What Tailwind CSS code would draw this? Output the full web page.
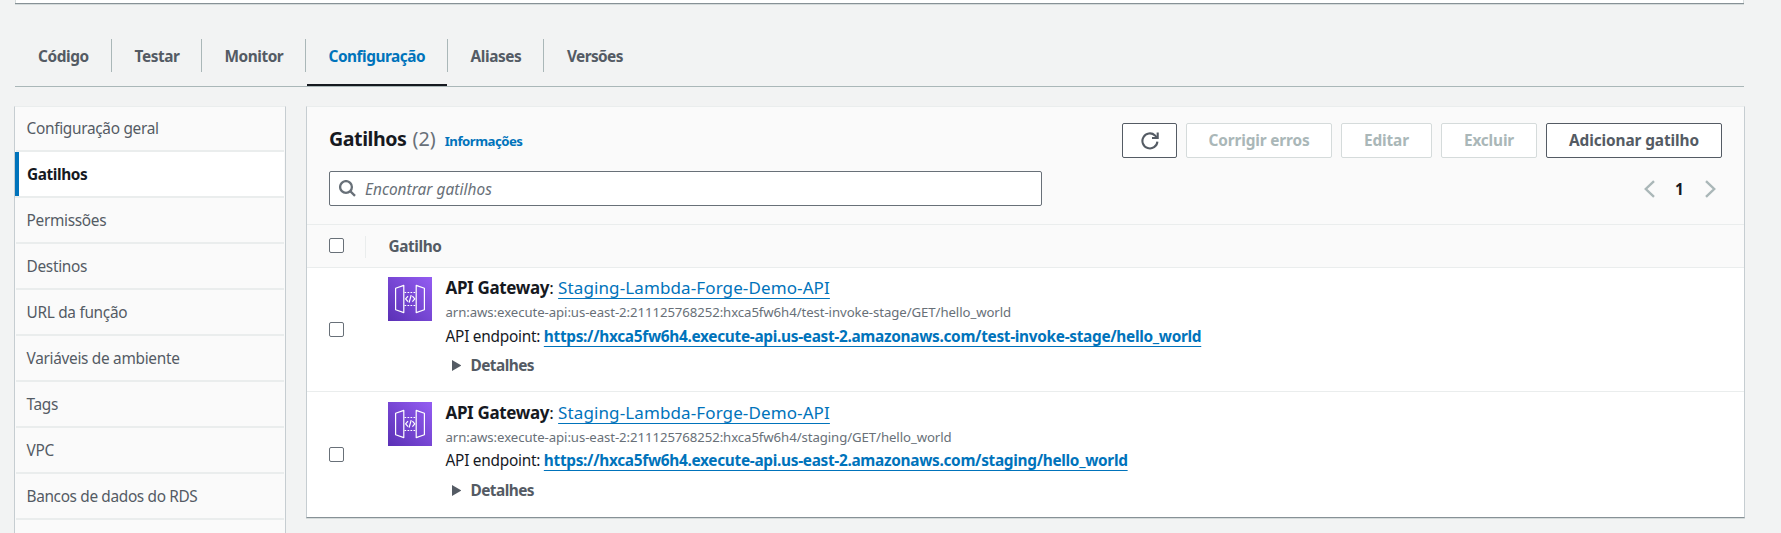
<!DOCTYPE html>
<html lang="pt-BR">
<head>
<meta charset="utf-8">
<title>Gatilhos</title>
<script src="https://cdn.jsdelivr.net/npm/@tailwindcss/browser@4"></script>
</head>
<body class="h-[533px] overflow-hidden bg-[#f2f3f3] font-['Noto_Sans','Liberation_Sans',sans-serif] text-[15.4px] text-[#16191f]">
<svg class="absolute size-0">
  <defs>
    <linearGradient id="gw" x1="0" y1="1" x2="1" y2="0"><stop offset="0" stop-color="#5a30b5"/><stop offset="1" stop-color="#945df2"/></linearGradient>
    <symbol id="gateway" viewBox="0 0 44 44">
      <rect width="44" height="44" fill="url(#gw)"/>
      <g fill="none" stroke="#fff" stroke-width="1.2" stroke-linejoin="round">
        <path d="M7.6 11.2 15.8 8.4V35.6L7.6 32.8Z"/>
        <path d="M36.4 11.2 28.2 8.4V35.6L36.4 32.8Z"/>
        <path d="M16.5 15.5H28M16.5 28.5H28" stroke-dasharray="1.7 1.3"/>
        <path d="M20 19.2 17.6 21.9 20 24.6M24.4 19.2 26.8 21.9 24.4 24.6M23.2 18.2 21.1 25.6"/>
      </g>
    </symbol>
  </defs>
</svg>

<div class="ml-[15px] h-[3px] w-[1729px] border-x border-[#d5dbdb] bg-white shadow-[0_1px_0_#879196,0_2px_0_#d5dbdb]"></div>

<nav class="ml-[15px] flex h-[84px] w-[1729px] border-b border-[#aab7b8] pt-9 font-bold leading-[35px] text-[#545b64]">
  <div class="h-[33px] w-[97px] border-r border-[#aab7b8] pl-[23px] tracking-[-0.4px]">Código</div>
  <div class="h-[33px] w-[90px] border-r border-[#aab7b8] pl-[22.5px] tracking-[-0.42px]">Testar</div>
  <div class="h-[33px] w-[104px] border-r border-[#aab7b8] pl-[22.5px] tracking-[-0.45px]">Monitor</div>
  <div class="flex w-[142px] flex-col text-[#0073bb]">
    <div class="h-[33px] border-r border-[#aab7b8] pl-[22.5px] tracking-[-0.48px]">Configuração</div>
    <div class="mt-auto mr-px ml-px h-[2px] bg-[#16191f]"></div>
  </div>
  <div class="h-[33px] w-[96px] border-r border-[#aab7b8] pl-[22.5px] tracking-[-0.4px]">Aliases</div>
  <div class="h-[33px] pl-[23px] tracking-[-0.6px]">Versões</div>
</nav>

<div class="ml-[14px] flex items-start gap-[20px] pt-[19px]">
  <aside class="h-[440px] w-[272px] shrink-0 border border-[#c6cdd1] border-t-[#eaeded] bg-[#fafafa] leading-[43px] tracking-[-0.3px] text-[#545b64]">
    <div class="mx-px h-[45px] border-b-2 border-[#eaeded] pl-[10.5px] leading-[44px]">Configuração geral</div>
    <div class="mr-px h-[46px] border-b-2 border-[#eaeded] bg-white font-bold tracking-[-0.4px] text-[#16191f]"><div class="h-[44px] border-l-4 border-[#0073bb] pl-[8px] leading-[45px]">Gatilhos</div></div>
    <div class="mx-px h-[46px] border-b-2 border-[#eaeded] pl-[10.5px] leading-[45px]">Permissões</div>
    <div class="mx-px h-[46px] border-b-2 border-[#eaeded] pl-[10.5px] leading-[45px]">Destinos</div>
    <div class="mx-px h-[46px] border-b-2 border-[#eaeded] pl-[10.5px] leading-[45px]">URL da função</div>
    <div class="mx-px h-[46px] border-b-2 border-[#eaeded] pl-[10.5px] leading-[45px]">Variáveis de ambiente</div>
    <div class="mx-px h-[46px] border-b-2 border-[#eaeded] pl-[10.5px] leading-[45px]">Tags</div>
    <div class="mx-px h-[46px] border-b-2 border-[#eaeded] pl-[10.5px] leading-[45px]">VPC</div>
    <div class="mx-px h-[46px] border-b-2 border-[#eaeded] pl-[10.5px] leading-[45px] tracking-[-0.35px]">Bancos de dados do RDS</div>
  </aside>

  <main class="w-[1439px] border border-[#c6cdd1] border-t-[#eaeded] border-b-[#879196] bg-white shadow-[0_1px_0_#d5dbdb]">
    <header class="border-b border-[#eaeded] bg-[#fafafa] pt-[16px] pr-[22px] pb-[18px] pl-[22px]">
      <div class="flex h-[35px] items-center">
        <h2 class="mb-[3px] text-[19.6px] font-bold leading-[34px] tracking-[-0.43px]">Gatilhos</h2>
        <span class="mb-[3px] ml-[6px] text-[19.8px] leading-[34px] text-[#687078]">(2)</span>
        <span class="mt-[3px] ml-[9px] text-[13.2px] font-bold tracking-[-0.5px] text-[#0073bb]">Informações</span>
        <div class="ml-auto flex gap-[9px] text-center font-bold leading-[33px]">
          <div class="flex h-[35px] w-[55px] items-center justify-center rounded-[2px] border border-[#545b64] bg-white">
            <svg class="size-[18px]" viewBox="0 0 18 18" fill="none" stroke="#545b64" stroke-width="2.1"><path d="M16.4 9.6A7.5 7.5 0 1 1 14 3.4L16 5.6"/><path d="M16.7 0.4V6H11"/></svg>
          </div>
          <div class="h-[35px] w-[146px] rounded-[2px] border border-[#d5dbdb] bg-white tracking-[-0.15px] text-[#aab7b8]">Corrigir erros</div>
          <div class="h-[35px] w-[91px] rounded-[2px] border border-[#d5dbdb] bg-white tracking-[-0.15px] text-[#aab7b8]">Editar</div>
          <div class="h-[35px] w-[96px] rounded-[2px] border border-[#d5dbdb] bg-white tracking-[-0.15px] text-[#aab7b8]">Excluir</div>
          <div class="h-[35px] w-[176px] rounded-[2px] border border-[#545b64] bg-white tracking-[-0.1px] text-[#545b64]">Adicionar gatilho</div>
        </div>
      </div>
      <div class="mt-[13px] flex items-center justify-between">
        <div class="flex h-[35px] w-[713px] items-center rounded-[2px] border border-[#687078] bg-white pl-[9px]">
          <svg class="size-[17px]" viewBox="0 0 17 17" fill="none" stroke="#687078" stroke-width="2.3"><circle cx="7" cy="7" r="5.9"/><path d="M11.2 11.2 16 15.8"/></svg>
          <span class="mt-[2px] ml-[9px] italic leading-[33px] tracking-[0.04px] text-[#687078]">Encontrar gatilhos</span>
        </div>
        <div class="mr-[6px] flex items-center">
          <svg class="h-[18px] w-[11px]" viewBox="0 0 11 18" fill="none" stroke="#aab7b8" stroke-width="2.4"><path d="M10 1.2 1.8 9 10 16.8"/></svg>
          <span class="mx-[20px] w-[9px] pt-px text-center text-[15.4px] font-bold leading-[33px]">1</span>
          <svg class="ml-px h-[18px] w-[11px]" viewBox="0 0 11 18" fill="none" stroke="#aab7b8" stroke-width="2.4"><path d="M1 1.2 9.2 9 1 16.8"/></svg>
        </div>
      </div>
    </header>

    <div class="flex h-[43px] items-center border-b border-[#eaeded] bg-[#fafafa] pl-[22px] pt-px">
      <div class="mb-[3px] size-[15px] rounded-[2px] border border-[#687078] bg-white"></div>
      <div class="ml-[21px] h-[22px] w-px bg-[#eaeded]"></div>
      <div class="ml-[22.5px] font-bold leading-[42px] tracking-[-0.4px] text-[#545b64]">Gatilho</div>
    </div>

    <div class="flex h-[124px] border-b border-[#eaeded] pl-[22px]">
      <div class="mt-[54px] size-[15px] rounded-[2px] border border-[#687078] bg-white"></div>
      <svg class="mt-[9px] ml-[44px] size-[44px]"><use href="#gateway"/></svg>
      <div class="pt-[8px] pl-[13.5px]">
        <p class="h-6 text-[17px] leading-6"><b class="tracking-[-0.35px]">API Gateway</b>: <a class="tracking-[0.11px] text-[#0073bb] underline decoration-1 underline-offset-[4px] [text-decoration-skip-ink:none]">Staging-Lambda-Forge-Demo-API</a></p>
        <p class="h-6 text-[13.2px] leading-6 tracking-[-0.075px] text-[#687078]">arn:aws:execute-api:us-east-2:211125768252:hxca5fw6h4/test-invoke-stage/GET/hello_world</p>
        <p class="mt-px h-6 leading-6 tracking-[-0.26px]">API endpoint: <a class="font-bold tracking-[-0.31px] text-[#0073bb] underline decoration-1 underline-offset-[4px] [text-decoration-skip-ink:none]">https://hxca5fw6h4.execute-api.us-east-2.amazonaws.com/test-invoke-stage/hello_world</a></p>
        <div class="mt-[5px] flex h-6 items-center pl-[6px] text-[#545b64]">
          <svg class="mb-[2px] h-[11px] w-[9.5px]" viewBox="0 0 9 11" preserveAspectRatio="none" fill="#545b64"><path d="M0 0 9 5.5 0 11Z"/></svg>
          <span class="ml-[9.5px] font-bold leading-6 tracking-[-0.55px]">Detalhes</span>
        </div>
      </div>
    </div>

    <div class="flex h-[125px] pl-[22px]">
      <div class="mt-[55px] size-[15px] rounded-[2px] border border-[#687078] bg-white"></div>
      <svg class="mt-[10px] ml-[44px] size-[44px]"><use href="#gateway"/></svg>
      <div class="pt-[9px] pl-[13.5px]">
        <p class="h-6 text-[17px] leading-6"><b class="tracking-[-0.35px]">API Gateway</b>: <a class="tracking-[0.11px] text-[#0073bb] underline decoration-1 underline-offset-[4px] [text-decoration-skip-ink:none]">Staging-Lambda-Forge-Demo-API</a></p>
        <p class="h-6 text-[13.2px] leading-6 tracking-[-0.075px] text-[#687078]">arn:aws:execute-api:us-east-2:211125768252:hxca5fw6h4/staging/GET/hello_world</p>
        <p class="h-6 leading-6 tracking-[-0.26px]">API endpoint: <a class="font-bold tracking-[-0.31px] text-[#0073bb] underline decoration-1 underline-offset-[4px] [text-decoration-skip-ink:none]">https://hxca5fw6h4.execute-api.us-east-2.amazonaws.com/staging/hello_world</a></p>
        <div class="mt-[6px] flex h-6 items-center pl-[6px] text-[#545b64]">
          <svg class="mb-[2px] h-[11px] w-[9.5px]" viewBox="0 0 9 11" preserveAspectRatio="none" fill="#545b64"><path d="M0 0 9 5.5 0 11Z"/></svg>
          <span class="ml-[9.5px] font-bold leading-6 tracking-[-0.55px]">Detalhes</span>
        </div>
      </div>
    </div>
  </main>
</div>
</body>
</html>
